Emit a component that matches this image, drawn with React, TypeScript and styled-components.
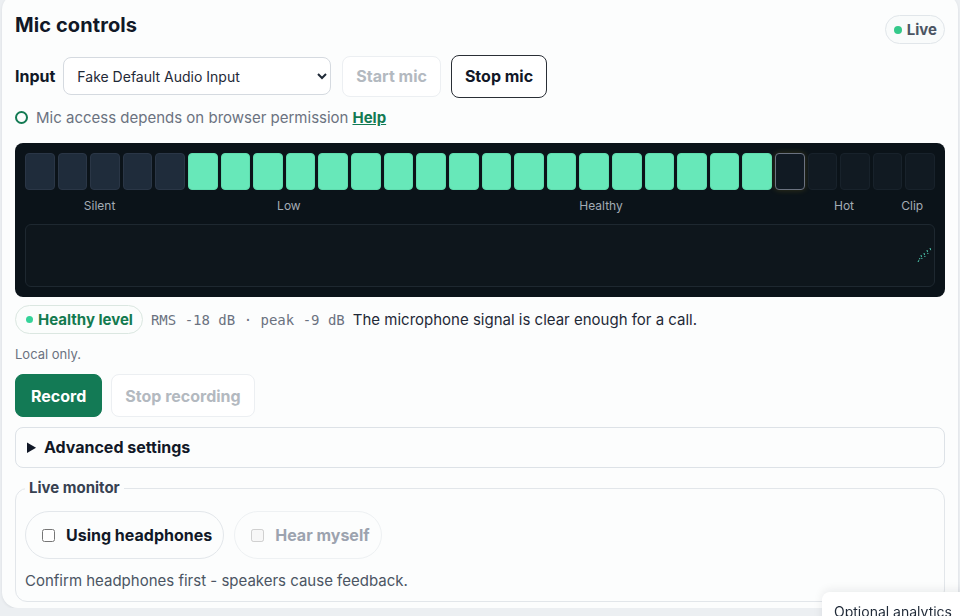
import React from "react";
import styled, { createGlobalStyle } from "styled-components";

const Global = createGlobalStyle`
  html, body { margin: 0; padding: 0; }
  body {
    background: #eceff2;
    font-family: Inter, "Noto Sans", "Liberation Sans", sans-serif;
    color: #111827;
    overflow: hidden;
  }
  * { box-sizing: border-box; }
`;

const Card = styled.div`
  margin: -6px 2px 0 2px;
  padding: 19px 13px 6px 13px;
  background: #fcfdfd;
  border-radius: 16px;
  box-shadow: 0 1px 3px rgba(15, 23, 42, 0.08);
  display: flex;
  flex-direction: column;
`;

const Header = styled.div`
  display: flex;
  justify-content: space-between;
  align-items: flex-start;
  height: 42px;
`;

const Title = styled.h1`
  margin: 0;
  font-size: 20px;
  line-height: 24px;
  font-weight: 700;
  color: #111827;
  letter-spacing: 0.1px;
`;

const LivePill = styled.div`
  margin-top: 2px;
  height: 29px;
  padding: 0 7px 0 8px;
  display: flex;
  align-items: center;
  gap: 5px;
  border: 1px solid #e1e6ea;
  border-radius: 999px;
  background: #f9fbfb;
  font-size: 15px;
  font-weight: 700;
  color: #4b5563;
`;

const Dot = styled.span<{ $color: string; $size?: number }>`
  width: ${(p) => p.$size ?? 8}px;
  height: ${(p) => p.$size ?? 8}px;
  border-radius: 50%;
  background: ${(p) => p.$color};
  flex: none;
`;

const ControlRow = styled.div`
  display: flex;
  align-items: center;
  height: 42px;
`;

const FieldLabel = styled.label`
  font-size: 16px;
  font-weight: 700;
  color: #111827;
  margin-right: 8px;
`;

const Select = styled.select`
  width: 268px;
  height: 38px;
  padding: 0 8px 0 9px;
  border: 1px solid #d5dae0;
  border-radius: 8px;
  background: #ffffff;
  font-family: Inter, "Noto Sans", sans-serif;
  font-size: 14px;
  color: #1f2937;
  margin-right: 11px;
`;

const Button = styled.button<{ $variant: "disabled" | "outline" | "primary"; $tall?: boolean }>`
  height: ${(p) => (p.$tall ? 43 : 41)}px;
  padding: 0 ${(p) => (p.$variant === "primary" ? 15 : 13)}px;
  border-radius: 8px;
  font-family: Inter, "Noto Sans", sans-serif;
  font-size: 16px;
  font-weight: 700;
  cursor: pointer;
  background: ${(p) => (p.$variant === "primary" ? "#137a55" : "#ffffff")};
  color: ${(p) =>
    p.$variant === "primary" ? "#ffffff" : p.$variant === "outline" ? "#111827" : "#b3b9c0"};
  border: ${(p) =>
    p.$variant === "primary"
      ? "1px solid #137a55"
      : p.$variant === "outline"
      ? "1.5px solid #2a2f36"
      : "1px solid #eceff2"};
`;

const ButtonRow = styled.div<{ $gap: number }>`
  display: flex;
  align-items: center;
  gap: ${(p) => p.$gap}px;
`;

const Status = styled.div`
  display: flex;
  align-items: center;
  gap: 8px;
  margin-top: 10px;
  height: 20px;
  font-size: 15px;
  color: #6b7280;
`;

const Ring = styled.span`
  width: 13px;
  height: 13px;
  border-radius: 50%;
  border: 2px solid #137a53;
  flex: none;
`;

const HelpLink = styled.a`
  color: #137a53;
  font-weight: 700;
  text-decoration: underline;
  margin-left: -4px;
`;

const MeterPanel = styled.div`
  margin-top: 16px;
  background: #0b1319;
  border-radius: 8px;
  padding: 10px;
`;

const Segments = styled.div`
  display: grid;
  grid-template-columns: repeat(28, 1fr);
  gap: 3px;
  height: 37px;
`;

type SegKind = "off" | "on" | "peak" | "dim";

const Segment = styled.div<{ $kind: SegKind }>`
  border-radius: 4px;
  background: ${(p) =>
    p.$kind === "on" ? "#67e8b9" : p.$kind === "off" ? "#1f2c3b" : p.$kind === "peak" ? "#111a23" : "#111a22"};
  border: ${(p) =>
    p.$kind === "on"
      ? "1px solid #5fdcae"
      : p.$kind === "off"
      ? "1px solid #2a3646"
      : p.$kind === "peak"
      ? "1.5px solid #6b7280"
      : "1px solid #18222b"};
  box-shadow: ${(p) => (p.$kind === "peak" ? "0 0 6px rgba(250, 204, 21, 0.18)" : "none")};
`;

const Scale = styled.div`
  position: relative;
  height: 16px;
  margin: 8px 0 10px;
`;

const ScaleLabel = styled.span`
  position: absolute;
  top: 0;
  transform: translateX(-50%);
  font-size: 12px;
  line-height: 16px;
  color: #a3acb5;
  white-space: nowrap;
`;

const Wave = styled.div`
  height: 63px;
  border: 1px solid #1e2830;
  border-radius: 6px;
  background: #0e161c;
  display: flex;
  justify-content: flex-end;
  align-items: flex-start;
  padding: 20px 1px 0 0;
`;

const LevelRow = styled.div`
  display: flex;
  align-items: center;
  margin-top: 8px;
  height: 29px;
`;

const LevelPill = styled.div`
  height: 29px;
  padding: 0 9px 0 10px;
  display: flex;
  align-items: center;
  gap: 5px;
  border: 1px solid #dbe7e1;
  border-radius: 999px;
  background: #fbfdfc;
  font-size: 15px;
  font-weight: 700;
  color: #137a4f;
  margin-right: 8px;
`;

const Mono = styled.span`
  font-family: "DejaVu Sans Mono", "Liberation Mono", monospace;
  font-size: 14px;
  color: #6b7280;
  margin-right: 8px;
`;

const Message = styled.span`
  font-size: 15px;
  color: #1f2937;
`;

const Small = styled.div`
  margin-top: 11px;
  font-size: 13px;
  line-height: 18px;
  color: #6b7280;
`;

const RecordRow = styled(ButtonRow)`
  margin-top: 11px;
`;

const Details = styled.details`
  margin-top: 10px;
  border: 1px solid #dde2e7;
  border-radius: 8px;
  background: #fcfdfd;
`;

const Summary = styled.summary`
  height: 39px;
  display: list-item;
  line-height: 39px;
  padding: 0 11px;
  font-size: 16px;
  font-weight: 700;
  color: #111827;
  cursor: pointer;
`;

const Fieldset = styled.fieldset`
  margin: 11px 0 0 0;
  border: 1px solid #e2e6ea;
  border-radius: 12px;
  padding: 14px 9px 10px 9px;
  min-width: 0;
`;

const Legend = styled.legend`
  padding: 0 4px;
  font-size: 15px;
  line-height: 18px;
  font-weight: 700;
  color: #374151;
`;

const ToggleRow = styled.div`
  display: flex;
  gap: 10px;
`;

const TogglePill = styled.label<{ $disabled?: boolean }>`
  height: 48px;
  padding: 0 11px 0 12px;
  display: flex;
  align-items: center;
  gap: 8px;
  border: 1px solid ${(p) => (p.$disabled ? "#eef1f3" : "#e3e7eb")};
  border-radius: 999px;
  font-size: 16px;
  font-weight: 700;
  color: ${(p) => (p.$disabled ? "#9ca3af" : "#111827")};
  background: #fcfdfd;

  input {
    margin: 3px 3px 3px 4px;
    width: 13px;
    height: 13px;
  }
`;

const Hint = styled.div`
  margin-top: 11px;
  font-size: 15px;
  line-height: 21px;
  color: #4b5563;
`;

const Toast = styled.div`
  position: fixed;
  left: 822px;
  top: 592px;
  width: 170px;
  height: 60px;
  padding: 11px 12px;
  background: #ffffff;
  border-top-left-radius: 8px;
  box-shadow: 0 -2px 10px rgba(15, 23, 42, 0.08);
  font-size: 14px;
  color: #1f2937;
`;

const segKinds: SegKind[] = Array.from({ length: 28 }, (_, i) =>
  i < 5 ? "off" : i < 23 ? "on" : i === 23 ? "peak" : "dim"
);

const scale = [
  { text: "Silent", at: 8.2 },
  { text: "Low", at: 29.0 },
  { text: "Healthy", at: 63.3 },
  { text: "Hot", at: 90.0 },
  { text: "Clip", at: 97.5 },
];

export default function App() {
  return (
    <>
      <Global />
      <Card>
        <Header>
          <Title>Mic controls</Title>
          <LivePill>
            <Dot $color="#34c98a" />
            Live
          </LivePill>
        </Header>

        <ControlRow>
          <FieldLabel htmlFor="mic-input">Input</FieldLabel>
          <Select id="mic-input" defaultValue="fake">
            <option value="fake">Fake Default Audio Input</option>
          </Select>
          <ButtonRow $gap={10}>
            <Button $variant="disabled" disabled>
              Start mic
            </Button>
            <Button $variant="outline" $tall>
              Stop mic
            </Button>
          </ButtonRow>
        </ControlRow>

        <Status>
          <Ring />
          Mic access depends on browser permission
          <HelpLink href="#">Help</HelpLink>
        </Status>

        <MeterPanel>
          <Segments>
            {segKinds.map((k, i) => (
              <Segment key={i} $kind={k} />
            ))}
          </Segments>
          <Scale>
            {scale.map((s) => (
              <ScaleLabel key={s.text} style={{ left: `${s.at}%` }}>
                {s.text}
              </ScaleLabel>
            ))}
          </Scale>
          <Wave>
            <svg width="16" height="20" viewBox="0 0 16 20">
              <path
                d="M1 17 L3 13 M4 10 L5 14 M7 8 L8 12 M10 5 L11 9 M13 3 L14 6"
                stroke="#4fd1b5"
                strokeWidth="1"
                strokeDasharray="2 1"
                fill="none"
              />
            </svg>
          </Wave>
        </MeterPanel>

        <LevelRow>
          <LevelPill>
            <Dot $color="#34d399" $size={7} />
            Healthy level
          </LevelPill>
          <Mono>RMS -18 dB · peak -9 dB</Mono>
          <Message>The microphone signal is clear enough for a call.</Message>
        </LevelRow>

        <Small>Local only.</Small>

        <RecordRow $gap={9}>
          <Button $variant="primary" $tall>
            Record
          </Button>
          <Button $variant="disabled" $tall disabled>
            Stop recording
          </Button>
        </RecordRow>

        <Details>
          <Summary>Advanced settings</Summary>
        </Details>

        <Fieldset>
          <Legend>Live monitor</Legend>
          <ToggleRow>
            <TogglePill>
              <input type="checkbox" />
              Using headphones
            </TogglePill>
            <TogglePill $disabled>
              <input type="checkbox" disabled />
              Hear myself
            </TogglePill>
          </ToggleRow>
          <Hint>Confirm headphones first - speakers cause feedback.</Hint>
        </Fieldset>
      </Card>
      <Toast>Optional analytics</Toast>
    </>
  );
}
